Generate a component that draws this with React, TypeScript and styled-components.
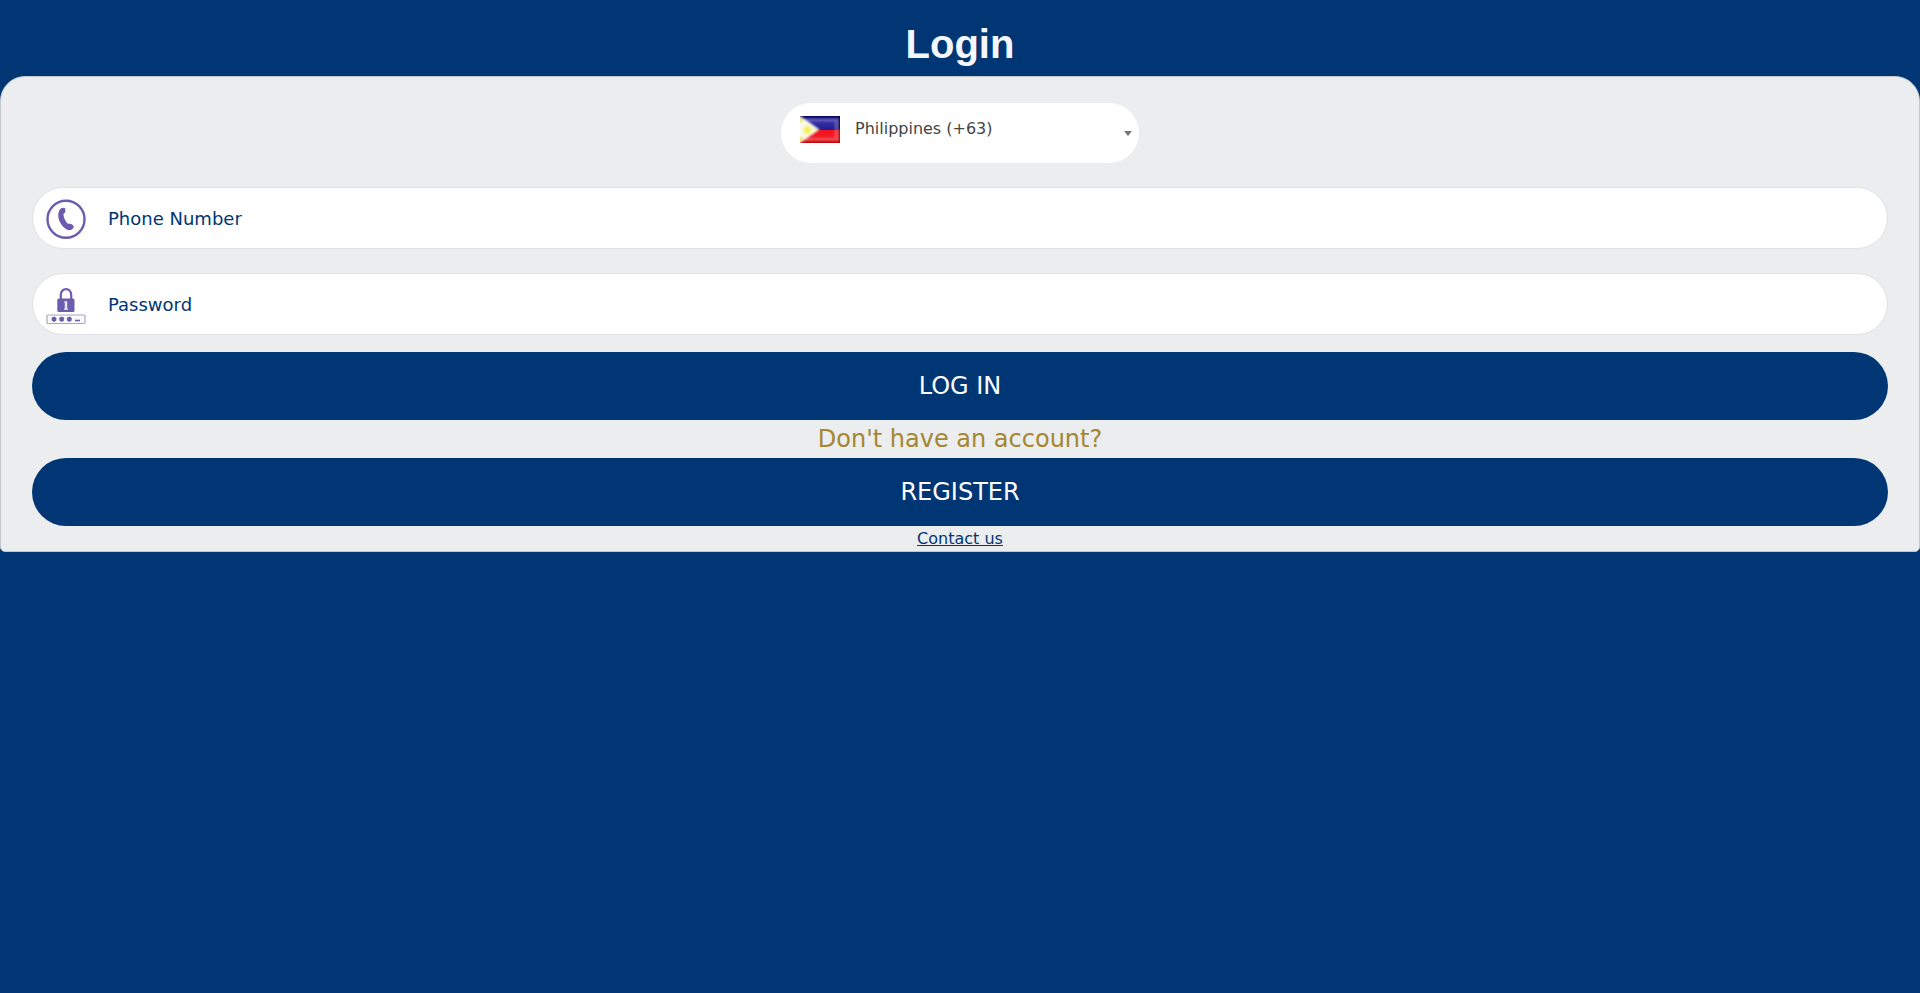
import React, { useState } from "react";
import styled, { createGlobalStyle } from "styled-components";

const NAVY = "#003674";
const PANEL = "#ebedee";
const GOLD = "#a58632";
const PURPLE = "#6c5cae";

const GlobalStyle = createGlobalStyle`
  *, *::before, *::after {
    box-sizing: border-box;
  }
  body {
    margin: 0;
    background: ${NAVY};
    color: ${NAVY};
    font-family: "DejaVu Sans", sans-serif;
    font-size: 16px;
    line-height: 24px;
  }
  button, input, select {
    font-family: inherit;
  }
`;

const Page = styled.main`
  display: flex;
  flex-direction: column;
`;

const Header = styled.header`
  padding: 20px 16px 8px;
  text-align: center;
`;

const Title = styled.h1`
  margin: 0;
  color: #f4f7fd;
  font-family: "Liberation Sans", sans-serif;
  font-size: 40px;
  font-weight: 700;
  line-height: 48px;
`;

const Card = styled.form`
  display: flex;
  flex-direction: column;
  padding: 26px 31px 0;
  background: ${PANEL};
  border: 1px solid #c4c7ca;
  border-radius: 25px 25px 5px 5px;
`;

const Fields = styled.div`
  display: flex;
  flex-direction: column;
  gap: 24px;
  margin-bottom: 17px;
`;

const CountryField = styled.div`
  position: relative;
  align-self: center;
  width: 100%;
  max-width: 358px;
`;

const CountrySelect = styled.select`
  display: block;
  width: 100%;
  height: 60px;
  padding: 0 40px 10px 74px;
  appearance: none;
  background: #fff;
  border: 0;
  border-radius: 30px;
  color: #444;
  font-size: 16px;
`;

const Flag = styled.svg`
  position: absolute;
  top: 13px;
  left: 19px;
  pointer-events: none;
`;

const Caret = styled.span`
  position: absolute;
  top: 28px;
  right: 7px;
  border: 4px solid transparent;
  border-top: 5px solid #777;
  border-bottom: 0;
  pointer-events: none;
`;

const Field = styled.label`
  display: flex;
  align-items: center;
  gap: 20px;
  height: 62px;
  padding: 0 30px 0 13px;
  background: #fff;
  border: 1px solid #dfe1e4;
  border-radius: 31px;
`;

const FieldInput = styled.input`
  flex: 1;
  min-width: 0;
  height: 100%;
  padding: 0 2px;
  background: transparent;
  border: 0;
  outline: 0;
  color: ${NAVY};
  font-size: 18px;

  &::placeholder {
    color: ${NAVY};
    opacity: 1;
  }
`;

const FieldIcon = styled.svg`
  flex: none;
  width: 40px;
  height: 42px;
`;

const ActionButton = styled.button`
  height: 68px;
  padding: 0 24px;
  background: ${NAVY};
  border: 0;
  border-radius: 34px;
  color: #fff;
  font-size: 24px;
  line-height: 36px;
  cursor: pointer;
`;

const Prompt = styled.p`
  margin: 0;
  color: ${GOLD};
  font-size: 24px;
  line-height: 38px;
  text-align: center;
`;

const ContactLink = styled.a`
  align-self: center;
  color: ${NAVY};
  line-height: 25px;
`;

function PhilippinesFlag() {
  return (
    <Flag width="40" height="27" viewBox="0 0 40 27" aria-hidden="true">
      <defs>
        <linearGradient id="blue" x1="0" y1="0" x2="0" y2="1">
          <stop offset="0" stopColor="#00005c" />
          <stop offset="0.3" stopColor="#3832a4" />
          <stop offset="1" stopColor="#211c96" />
        </linearGradient>
        <linearGradient id="red" x1="0" y1="0" x2="0" y2="1">
          <stop offset="0" stopColor="#f50f1b" />
          <stop offset="0.7" stopColor="#ee2028" />
          <stop offset="1" stopColor="#b80008" />
        </linearGradient>
        <radialGradient id="sun">
          <stop offset="0" stopColor="#f2ee35" />
          <stop offset="0.5" stopColor="#f6f37c" />
          <stop offset="1" stopColor="#fff" stopOpacity="0" />
        </radialGradient>
        <filter id="soften">
          <feGaussianBlur stdDeviation="0.8" />
        </filter>
      </defs>
      <rect width="40" height="14" fill="url(#blue)" />
      <rect y="14" width="40" height="13" fill="url(#red)" />
      <g filter="url(#soften)">
        <path d="M4 4H36V23.500H4" fill="none" stroke="#fff" strokeOpacity="0.25" strokeWidth="2.500" />
        <path d="M38 -2h4v16h-4z" fill="#00004c" fillOpacity="0.8" />
        <path d="M38 14h4v15h-4z" fill="#b00010" fillOpacity="0.8" />
        <path d="M-3 -2L0 0L19.500 13.500L0 27L-3 29z" fill="#fbfaf0" />
        <circle cx="7.500" cy="14" r="7" fill="url(#sun)" />
        <path d="M-1 0l5 5l-5 2zM-1 27l5-5l-5-2z" fill="#eee95c" />
        <circle cx="15.500" cy="13.500" r="1.500" fill="#f3ed8c" />
      </g>
    </Flag>
  );
}

function PhoneIcon() {
  return (
    <FieldIcon viewBox="0 0 40 42" aria-hidden="true">
      <circle cx="20" cy="22.300" r="18.500" fill="none" stroke={PURPLE} strokeWidth="2.400" />
      <path
        d="M14.500 11.800C16 10.600 18.500 10.500 19.300 11.600V15.300C18.900 16.200 17.500 16.500 17.400 17.500C17.600 20.500 19.300 24 21.600 26.500C22.400 27.200 23.500 26.400 24.600 26.800C26 27.300 27.500 28.500 27.800 29.900C27 32 25 33.200 22.900 33.200C19 32.300 15.400 28.700 13.500 24.300C11.900 19.900 11.600 15.100 14.500 11.800Z"
        fill={PURPLE}
      />
    </FieldIcon>
  );
}

function PasswordIcon() {
  return (
    <FieldIcon viewBox="0 0 40 42" aria-hidden="true">
      <path d="M14.800 17V12C14.800 4.200 25.200 4.200 25.200 12V17" fill="none" stroke={PURPLE} strokeWidth="2.200" />
      <rect x="11.300" y="15.500" width="17.200" height="13.500" rx="1.500" fill={PURPLE} />
      <path d="M18.200 18.200h3v7.300h0.800v1.300h-4v-1.300h0.800v-6h-0.600z" fill="#e9e6f3" />
      <rect x="1" y="32" width="38" height="8.500" rx="1" fill="#fbfaff" stroke="#aba7bd" strokeWidth="1.200" />
      <g stroke={PURPLE} strokeWidth="2">
        <path d="M8 33.700v5M5.800 34.900l4.400 2.600M10.200 34.900l-4.400 2.600" />
        <path d="M15.700 33.700v5M13.500 34.900l4.400 2.600M17.900 34.900l-4.400 2.600" />
        <path d="M23.300 33.700v5M21.100 34.900l4.400 2.600M25.500 34.900l-4.400 2.600" />
        <path d="M29 37.500h5" strokeWidth="1.600" />
      </g>
    </FieldIcon>
  );
}

export default function App() {
  const [phone, setPhone] = useState("");
  const [password, setPassword] = useState("");

  return (
    <Page>
      <GlobalStyle />
      <Header>
        <Title>Login</Title>
      </Header>
      <Card onSubmit={(event) => event.preventDefault()}>
        <Fields>
          <CountryField>
            <CountrySelect aria-label="Country code" defaultValue="63">
              <option value="63">Philippines (+63)</option>
            </CountrySelect>
            <PhilippinesFlag />
            <Caret />
          </CountryField>
          <Field>
            <PhoneIcon />
            <FieldInput
              type="tel"
              aria-label="Phone Number"
              placeholder="Phone Number"
              value={phone}
              onChange={(event) => setPhone(event.target.value)}
            />
          </Field>
          <Field>
            <PasswordIcon />
            <FieldInput
              type="password"
              aria-label="Password"
              placeholder="Password"
              value={password}
              onChange={(event) => setPassword(event.target.value)}
            />
          </Field>
        </Fields>
        <ActionButton type="submit">LOG IN</ActionButton>
        <Prompt>Don't have an account?</Prompt>
        <ActionButton type="button">REGISTER</ActionButton>
        <ContactLink href="#contact">Contact us</ContactLink>
      </Card>
    </Page>
  );
}
